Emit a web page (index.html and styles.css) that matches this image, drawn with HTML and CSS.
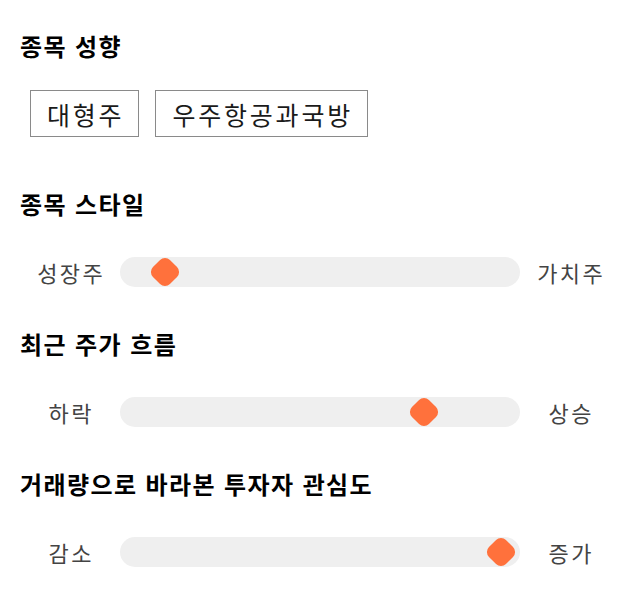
FILE: index.html
```html
<!DOCTYPE html>
<html lang="ko">
<head>
<meta charset="utf-8">
<link rel="stylesheet" href="styles.css">
</head>
<body>
<main class="page">
  <section class="section">
    <h2 class="title">종목 성향</h2>
    <div class="tags">
      <span class="tag">대형주</span>
      <span class="tag">우주항공과국방</span>
    </div>
  </section>
  <section class="section">
    <h2 class="title">종목 스타일</h2>
    <div class="slider-row">
      <span class="label">성장주</span>
      <div class="track"><span class="knob" style="left: 11.25%"></span></div>
      <span class="label">가치주</span>
    </div>
  </section>
  <section class="section">
    <h2 class="title">최근 주가 흐름</h2>
    <div class="slider-row">
      <span class="label">하락</span>
      <div class="track"><span class="knob" style="left: 76%"></span></div>
      <span class="label">상승</span>
    </div>
  </section>
  <section class="section">
    <h2 class="title">거래량으로 바라본 투자자 관심도</h2>
    <div class="slider-row">
      <span class="label">감소</span>
      <div class="track"><span class="knob" style="left: 95.25%"></span></div>
      <span class="label">증가</span>
    </div>
  </section>
</main>
</body>
</html>
```

FILE: styles.css
```css
html, body {
  margin: 0;
  padding: 0;
  background: #ffffff;
}
body {
  font-family: "Noto Sans CJK KR", "Noto Sans", sans-serif;
  color: #111;
}
.page {
  padding: 31px 20px 0 20px;
  display: flex;
  flex-direction: column;
}
.section {
  display: flex;
  flex-direction: column;
}
.section + .section {
  margin-top: 42px;
}
.section:nth-child(2) {
  margin-top: 52px;
}
.title {
  margin: 0;
  font-size: 24px;
  line-height: 30px;
  font-weight: 700;
  letter-spacing: 1.4px;
  color: #000;
}
.tags {
  display: flex;
  gap: 16px;
  margin: 29px 0 0 10px;
}
.tag {
  border: 1px solid #8a8a8a;
  height: 45px;
  padding: 0 14px 0 16px;
  display: flex;
  align-items: center;
  font-size: 25px;
  letter-spacing: 2.8px;
  color: #1a1a1a;
}
.slider-row {
  display: flex;
  align-items: center;
  margin-top: 38px;
  height: 30px;
}
.label {
  width: 100px;
  text-align: center;
  font-size: 22px;
  letter-spacing: 2.5px;
  text-indent: 2.5px;
  color: #444;
  line-height: 30px;
}
.track {
  position: relative;
  flex: 1;
  height: 30px;
  background: #efefef;
  border-radius: 15px;
}
.knob {
  position: absolute;
  top: 50%;
  width: 24px;
  height: 24px;
  background: #ff713c;
  border-radius: 7px;
  transform: translate(-50%, -50%) rotate(45deg);
}
```
